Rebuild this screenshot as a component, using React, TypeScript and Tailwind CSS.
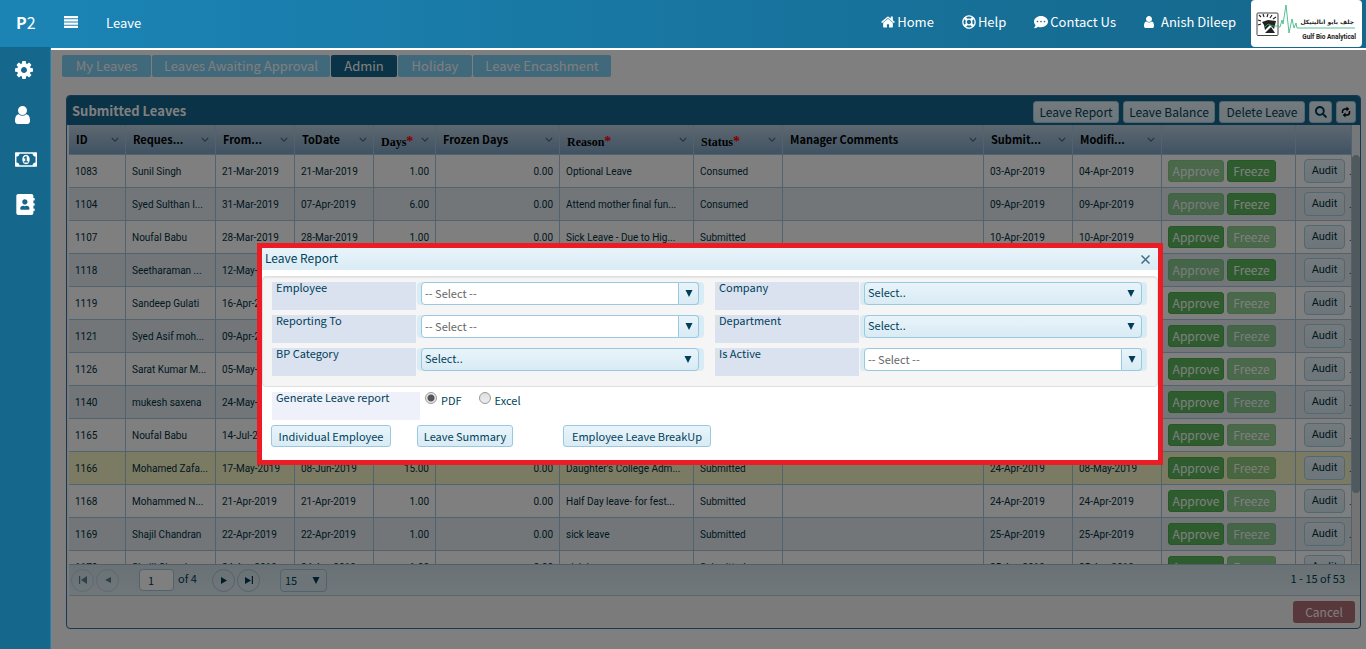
import React from 'react';
import { FaAddressBook, FaCommentDots, FaRegLifeRing, FaSearch } from 'react-icons/fa';

interface LeaveRow {
  id: number;
  requester: string;
  from: string;
  to: string;
  days: string;
  reason: string;
  status: 'Consumed' | 'Submitted';
  submitted: string;
  modified: string;
  approvable: boolean;
}

interface Column {
  label: string;
  width: string;
  required?: boolean;
}

const tabs = [
  { label: 'My Leaves', width: 'w-[89px]' },
  { label: 'Leaves Awaiting Approval', width: 'w-[178px]' },
  { label: 'Admin', width: 'w-[66px]' },
  { label: 'Holiday', width: 'w-[74px]' },
  { label: 'Leave Encashment', width: 'w-[138px]' },
];

const columns: Column[] = [
  { label: 'ID', width: 'w-[57px]' },
  { label: 'Reques...', width: 'w-[90px]' },
  { label: 'From...', width: 'w-[79px]' },
  { label: 'ToDate', width: 'w-[79px]' },
  { label: 'Days', width: 'w-[62px]', required: true },
  { label: 'Frozen Days', width: 'w-[124px]' },
  { label: 'Reason', width: 'w-[134px]', required: true },
  { label: 'Status', width: 'w-[89px]', required: true },
  { label: 'Manager Comments', width: '' },
  { label: 'Submit...', width: 'w-[89px]' },
  { label: 'Modifi...', width: 'w-[89px]' },
  { label: '', width: 'w-[134px]' },
  { label: '', width: 'w-[56px]' },
];

const rows: LeaveRow[] = [
  { id: 1083, requester: 'Sunil Singh', from: '21-Mar-2019', to: '21-Mar-2019', days: '1.00', reason: 'Optional Leave', status: 'Consumed', submitted: '03-Apr-2019', modified: '04-Apr-2019', approvable: false },
  { id: 1104, requester: 'Syed Sulthan I...', from: '31-Mar-2019', to: '07-Apr-2019', days: '6.00', reason: 'Attend mother final fun...', status: 'Consumed', submitted: '09-Apr-2019', modified: '09-Apr-2019', approvable: false },
  { id: 1107, requester: 'Noufal Babu', from: '28-Mar-2019', to: '28-Mar-2019', days: '1.00', reason: 'Sick Leave - Due to Hig...', status: 'Submitted', submitted: '10-Apr-2019', modified: '10-Apr-2019', approvable: true },
  { id: 1118, requester: 'Seetharaman ...', from: '12-May-2019', to: '16-May-2019', days: '5.00', reason: 'Annual Leave', status: 'Submitted', submitted: '14-Apr-2019', modified: '14-Apr-2019', approvable: false },
  { id: 1119, requester: 'Sandeep Gulati', from: '16-Apr-2019', to: '16-Apr-2019', days: '1.00', reason: 'Sick Leave', status: 'Submitted', submitted: '15-Apr-2019', modified: '15-Apr-2019', approvable: true },
  { id: 1121, requester: 'Syed Asif moh...', from: '09-Apr-2019', to: '09-Apr-2019', days: '1.00', reason: 'Sick Leave', status: 'Submitted', submitted: '15-Apr-2019', modified: '15-Apr-2019', approvable: true },
  { id: 1126, requester: 'Sarat Kumar M...', from: '05-May-2019', to: '09-May-2019', days: '5.00', reason: 'Annual Leave', status: 'Submitted', submitted: '16-Apr-2019', modified: '16-Apr-2019', approvable: true },
  { id: 1140, requester: 'mukesh saxena', from: '24-May-2019', to: '30-May-2019', days: '5.00', reason: 'Annual Leave', status: 'Submitted', submitted: '18-Apr-2019', modified: '18-Apr-2019', approvable: true },
  { id: 1165, requester: 'Noufal Babu', from: '14-Jul-2019', to: '25-Jul-2019', days: '10.00', reason: 'Annual Leave', status: 'Submitted', submitted: '24-Apr-2019', modified: '24-Apr-2019', approvable: true },
  { id: 1166, requester: 'Mohamed Zafa...', from: '17-May-2019', to: '08-Jun-2019', days: '15.00', reason: "Daughter's College Adm...", status: 'Submitted', submitted: '24-Apr-2019', modified: '08-May-2019', approvable: true },
  { id: 1168, requester: 'Mohammed N...', from: '21-Apr-2019', to: '21-Apr-2019', days: '1.00', reason: 'Half Day leave- for fest...', status: 'Submitted', submitted: '24-Apr-2019', modified: '24-Apr-2019', approvable: true },
  { id: 1169, requester: 'Shajil Chandran', from: '22-Apr-2019', to: '22-Apr-2019', days: '1.00', reason: 'sick leave', status: 'Submitted', submitted: '25-Apr-2019', modified: '25-Apr-2019', approvable: true },
  { id: 1170, requester: 'Shajil Chandran', from: '24-Apr-2019', to: '24-Apr-2019', days: '1.00', reason: 'sick leave', status: 'Submitted', submitted: '25-Apr-2019', modified: '25-Apr-2019', approvable: true },
];

const SELECTED_ID = 1166;

const MenuIcon = () => (
  <svg viewBox="0 0 14 12" fill="currentColor" className="h-3 w-[14px]" aria-hidden="true">
    <path d="M0 0h14v2.200H0zM0 3.300h14v2.200H0zM0 6.600h14v2.200H0zM0 9.800h14V12H0z" />
  </svg>
);

const UserIcon = ({ className }: { className: string }) => (
  <svg viewBox="256 128 1280 1536" fill="currentColor" className={className} aria-hidden="true">
    <path d="M1536 1399q0 109-62.500 187t-150.500 78h-854q-88 0-150.500-78t-62.500-187q0-85 8.500-160.500t31.500-152 58.500-131 94-89 134.500-34.500q131 128 313 128t313-128q76 0 134.500 34.500t94 89 58.500 131 31.500 152 8.500 160.500zm-256-887q0 159-112.500 271.500t-271.500 112.500-271.500-112.500-112.500-271.500 112.500-271.500 271.500-112.500 271.500 112.500 112.500 271.500z" />
  </svg>
);

const CogIcon = () => (
  <svg viewBox="128 128 1536 1536" fill="currentColor" className="size-[18px]" aria-hidden="true">
    <path d="M1152 896q0-106-75-181t-181-75-181 75-75 181 75 181 181 75 181-75 75-181zm512-109v222q0 12-8 23t-20 13l-185 28q-19 54-39 91 35 50 107 138 10 12 10 25t-9 23q-27 37-99 108t-94 71q-12 0-26-9l-138-108q-44 23-91 38-16 136-29 186-7 28-36 28h-222q-14 0-24.500-8.500t-11.500-21.500l-28-184q-49-16-90-37l-141 107q-10 9-25 9-14 0-25-11-126-114-165-168-7-10-7-23 0-12 8-23 15-21 51-66.500t54-70.500q-27-50-41-99l-183-27q-13-2-21-12.500t-8-23.500v-222q0-12 8-23t19-13l186-28q14-46 39-92-40-57-107-138-10-12-10-24 0-10 9-23 26-36 98.500-107.500t94.500-71.500q13 0 26 10l138 107q44-23 91-38 16-136 29-186 7-28 36-28h222q14 0 24.500 8.500t11.500 21.500l28 184q49 16 90 37l142-107q9-9 24-9 13 0 25 10 129 119 165 170 7 8 7 22 0 12-8 23-15 21-51 66.500t-54 70.500q26 50 41 98l183 28q13 2 21 12.500t8 23.500z" />
  </svg>
);

const MoneyIcon = () => (
  <svg viewBox="0 256 1920 1280" fill="currentColor" className="h-[15px] w-[22px]" aria-hidden="true">
    <path d="M768 1152h384v-96h-128v-448h-114l-148 137 77 80q42-37 55-57h2v288h-128v96zm512-256q0 70-21 142t-59.500 134-101.500 101-138 39-138-39-101.500-101-59.500-134-21-142 21-142 59.500-134 101.500-101 138-39 138 39 101.500 101 59.500 134 21 142zm512 256v-512q-106 0-181-75t-75-181h-1152q0 106-75 181t-181 75v512q106 0 181 75t75 181h1152q0-106 75-181t181-75zm128-832v1152q0 26-19 45t-45 19h-1792q-26 0-45-19t-19-45v-1152q0-26 19-45t45-19h1792q26 0 45 19t19 45z" />
  </svg>
);

const HomeIcon = () => (
  <svg viewBox="64 192 1664 1408" fill="currentColor" className="h-3 w-[14px]" aria-hidden="true">
    <path d="M1472 992v480q0 26-19 45t-45 19h-384v-384h-256v384h-384q-26 0-45-19t-19-45v-480q0-1 .5-3t.5-3l575-474 575 474q1 2 1 6zm223-69l-62 74q-8 9-21 11h-3q-13 0-21-7l-692-577-692 577q-12 8-24 7-13-2-21-11l-62-74q-8-10-7-23.500t11-21.500l719-599q32-26 76-26t76 26l244 204v-195q0-14 9-23t23-9h192q14 0 23 9t9 23v408l219 182q10 8 11 21.500t-7 23.500z" />
  </svg>
);

const RefreshIcon = () => (
  <svg viewBox="0 0 12 12" fill="none" stroke="#000" strokeWidth="1.5" className="size-3" aria-hidden="true">
    <path d="M2.500 7V5.500a2.500 2.500 0 0 1 2.500-2.500h2M9.500 5v1.500a2.500 2.500 0 0 1-2.500 2.500H5" />
    <path d="M6.500 .5 9.300 3 6.500 5.500zM5.500 6.500 2.700 9l2.800 2.500z" fill="#000" stroke="none" />
  </svg>
);

const ChevronIcon = () => (
  <svg viewBox="0 0 10 6" fill="none" stroke="#44617c" strokeWidth="1.4" className="h-[5px] w-2 shrink-0" aria-hidden="true">
    <path d="M1 1l4 4 4-4" />
  </svg>
);

const ArrowDown = ({ className = '' }: { className?: string }) => (
  <svg viewBox="0 0 8 7" fill="#003f59" className={`h-[7px] w-2 ${className}`} aria-hidden="true">
    <path d="M.5 0h7L4 7z" />
  </svg>
);

const Logo = () => (
  <svg viewBox="0 0 111 47" className="h-[47px] w-[111px] rounded bg-white" role="img" aria-label="Gulf Bio Analytical">
    <rect x="6" y="13" width="21" height="22.500" rx="1" fill="#fff" stroke="#444" />
    <path d="M11 22l6-2 8 1-2 8-4-4-5 5-1-5z" fill="#222" />
    <path d="M14 33l6-6 4 6z" fill="#222" />
    <path d="M8 15l2 2M12 14l1 3M17 14l-1 3M21 15l-2 3M25 17l-3 2M7 20l3 1M7 25l3-1" stroke="#222" strokeWidth="1.200" />
    <path d="M13 28l4-4 5 2h5" fill="none" stroke="#35b36b" strokeWidth="0.800" />
    <path d="M27 27h2l2-7 1 4 3-19 3 28 3-14 2 9 2-5 1 5h58" fill="none" stroke="#45b98a" strokeWidth="0.900" />
    <text x="103" y="24" textAnchor="start" direction="rtl" fontSize="6" fontWeight="700" fill="#222" fontFamily="DejaVu Sans, sans-serif">جلف بايو اناليتيكل</text>
    <text x="105" y="39" textAnchor="end" fontSize="6.500" fontWeight="700" fill="#222" fontFamily="Roboto, sans-serif">Gulf Bio Analytical</text>
  </svg>
);

const Sidebar = () => (
  <aside className="flex w-[51px] shrink-0 flex-col border-r border-[#1b84b5] bg-[#15678b] text-white">
    <div className="flex h-[47px] items-center bg-[#1b84b5] pb-1 pl-4 text-base">
      <b>P</b>2
    </div>
    <nav className="flex flex-col">
      <a href="#settings" aria-label="Settings" className="flex h-[45px] items-center pl-[15px]"><CogIcon /></a>
      <a href="#employees" aria-label="Employees" className="flex h-[45px] items-center pl-[15px]"><UserIcon className="h-[18px] w-[15px]" /></a>
      <a href="#payroll" aria-label="Payroll" className="flex h-[45px] items-center pl-[15px]"><MoneyIcon /></a>
      <a href="#contacts" aria-label="Contacts" className="flex h-[45px] items-center pl-[15px]"><FaAddressBook size={21} /></a>
    </nav>
  </aside>
);

const TopBar = () => (
  <header className="flex h-[50px] shrink-0 items-start border-b-2 border-white bg-linear-to-r from-[#1b84b5] to-[#15678b] text-white">
    <button type="button" aria-label="Toggle menu" className="mt-4 ml-[13px]"><MenuIcon /></button>
    <h1 className="mt-[14px] ml-7 text-[13px] leading-[18px]">Leave</h1>
    <nav className="ml-auto flex h-[44px] items-center gap-7 text-[13px]">
      <a href="#home" className="flex items-center gap-0.5"><HomeIcon />Home</a>
      <a href="#help" className="flex items-center gap-0.5"><FaRegLifeRing size={14} />Help</a>
      <a href="#contact" className="flex items-center gap-0.5"><FaCommentDots size={14} />Contact Us</a>
      <a href="#profile" className="flex items-center gap-[7px]"><UserIcon className="h-3 w-[10px]" />Anish Dileep</a>
    </nav>
    <span className="mr-1 ml-[15px]"><Logo /></span>
  </header>
);

const toolButton = 'flex h-[22px] items-center justify-center rounded-[3px] border border-[#a3d0e4] bg-linear-to-b from-[#e9f4fa] to-[#d9ecf5] text-[12px] text-[#003f59]';
const actionButton = 'h-[22px] rounded-[3px] border border-[#4cae4c] bg-[#5cb85c] text-[12px] leading-[18px] text-white disabled:opacity-65';

const LeaveGrid = () => (
  <div className="flex h-[440px] overflow-hidden border-b border-[#a3c0d0] bg-white">
    <div className="min-w-0 flex-1">
      <table className="w-full table-fixed border-separate border-spacing-0 text-[#00303f]">
        <thead>
          <tr className="h-[30px] bg-linear-to-b from-[#bcd0e0] to-[#7ea4c6] text-[11px] text-black">
            {columns.map((col, i) => (
              <th key={i} className={`border-r border-b border-[#a3c7dc] p-0 text-left font-bold ${col.width}`}>
                {col.label && (
                  <span className="flex items-center justify-between pr-[6px] pl-[7px]">
                    {col.required ? (
                      <span className="pt-1 font-['Liberation_Serif',serif] text-[12px]">{col.label}<span className="text-sm leading-none text-[#ff0000]">*</span></span>
                    ) : (
                      <span className="whitespace-nowrap">{col.label}</span>
                    )}
                    <ChevronIcon />
                  </span>
                )}
              </th>
            ))}
          </tr>
        </thead>
        <tbody className="font-[Roboto,sans-serif] text-[10px]">
          {rows.map((row, i) => (
            <tr
              key={row.id}
              className={`h-[33px] *:overflow-hidden *:border-r *:border-b *:border-[#a3c7dc] *:px-[6px] *:py-0 *:whitespace-nowrap ${row.id === SELECTED_ID ? 'bg-[#f7f7c9]' : i % 2 ? 'bg-[#e4edf3]' : 'bg-white'}`}
            >
              <td>{row.id}</td>
              <td>{row.requester}</td>
              <td>{row.from}</td>
              <td>{row.to}</td>
              <td className="text-right">{row.days}</td>
              <td className="text-right">0.00</td>
              <td>{row.reason}</td>
              <td>{row.status}</td>
              <td></td>
              <td>{row.submitted}</td>
              <td>{row.modified}</td>
              <td>
                <div className="flex gap-[3px] font-['Noto_Sans_CJK_SC',sans-serif]">
                  <button type="button" disabled={!row.approvable} className={`w-14 ${actionButton}`}>Approve</button>
                  <button type="button" disabled={row.approvable} className={`w-[49px] ${actionButton}`}>Freeze</button>
                </div>
              </td>
              <td>
                <div className="flex items-center gap-1 pl-0.5">
                  <button type="button" className="h-6 w-[41px] shrink-0 rounded border border-[#a3d0e4] bg-linear-to-b from-[#e9f4fa] to-[#d9ecf5] text-[11px]">Audit</button>
                  <span>.</span>
                </div>
              </td>
            </tr>
          ))}
        </tbody>
      </table>
    </div>
    <div className="flex w-2 shrink-0 flex-col">
      <div className="h-[30px] shrink-0 bg-[#e9f0f5]" />
      <div className="flex-1 rounded-full bg-[#e8e8e8]">
        <div className="h-[338px] rounded-full bg-[#a0b2bd]" />
      </div>
    </div>
  </div>
);

const PagerButton = ({ label, path, disabled }: { label: string; path: string; disabled?: boolean }) => (
  <button type="button" aria-label={label} disabled={disabled} className="flex size-[23px] items-center justify-center rounded-full border border-[#a3c7dc] disabled:opacity-60">
    <svg viewBox="0 0 8 8" className="size-2" fill="#003f59" aria-hidden="true"><path d={path} /></svg>
  </button>
);

const Pager = () => (
  <div className="flex h-[31px] items-center border-b border-[#b5ccd8] bg-linear-to-b from-[#d4e4ea] to-[#e2eef5] pl-0.5 text-[11px] text-[#003f59]">
    <div className="flex gap-0.5">
      <PagerButton label="First page" path="M0 0h1.200v8H0zM8 0v8L2 4z" disabled />
      <PagerButton label="Previous page" path="M7 1v6L1 4z" disabled />
    </div>
    <input aria-label="Page" defaultValue="1" className="ml-5 h-[22px] w-[35px] rounded border border-[#a3c7dc] bg-white pl-2" />
    <span className="ml-1 w-[19px] pb-1 whitespace-nowrap">of 4</span>
    <div className="ml-[15px] flex gap-0.5">
      <PagerButton label="Next page" path="M1 1v7l6-3.500z" />
      <PagerButton label="Last page" path="M0 1v7l6-3.500zM6.800 0H8v8H6.800z" />
    </div>
    <div className="relative ml-5 flex items-center">
      <select aria-label="Rows per page" className="h-[23px] w-[47px] appearance-none rounded border border-[#a3c7dc] bg-[#dcebf3] pl-1">
        <option>15</option>
      </select>
      <ArrowDown className="pointer-events-none absolute right-[7px]" />
    </div>
    <span className="mr-[15px] ml-auto pb-1">1 - 15 of 53</span>
  </div>
);

const Field = ({ id, label, combo }: { id: string; label: string; combo?: boolean }) => (
  <div className="flex h-7">
    <label htmlFor={id} className="w-36 shrink-0 bg-[#dae1ef] pl-1 text-[11px] leading-[10px]">{label}</label>
    <div className="relative ml-px flex h-[23px] flex-1 rounded bg-[#d9ebf5] pr-[5px] pl-1">
      {combo ? (
        <>
          <input id={id} placeholder="-- Select --" className="min-w-0 flex-1 rounded-l border border-[#98c9e0] bg-white pl-[3px] text-[11px] placeholder:text-[#666]" />
          <button type="button" aria-label={`Open ${label}`} className="flex w-5 items-center justify-center rounded-r border border-l-0 border-[#98c9e0] bg-linear-to-b from-[#e9f4fa] to-[#d9ebf5]">
            <ArrowDown />
          </button>
        </>
      ) : (
        <>
          <select id={id} className="min-w-0 flex-1 appearance-none rounded border border-[#98c9e0] bg-linear-to-b from-[#e9f4fa] to-[#d9ebf5] pb-[3px] pl-[3px] text-[11px]">
            <option>Select..</option>
          </select>
          <ArrowDown className="pointer-events-none absolute top-2 right-3" />
        </>
      )}
    </div>
  </div>
);

const reportButton = 'h-[22px] rounded-[3px] border border-[#98c9e0] bg-linear-to-b from-[#e9f4fa] to-[#d9ebf5] text-[11px] leading-5 whitespace-nowrap';
const radio = 'mr-1 size-3 appearance-none rounded-full border border-[#999] bg-linear-to-b from-[#ddd] to-[#eee] bg-origin-border checked:bg-[radial-gradient(circle,#555_3px,#e8e8e8_4px)]';

const LeaveReportDialog = () => (
  <section role="dialog" aria-labelledby="report-title" className="h-[222px] w-[906px] border-5 border-[#ed1c24] bg-white text-[#003f59]">
    <div className="flex h-[22px] items-center justify-between bg-linear-to-b from-[#e9f4fa] to-[#d9ebf5] pr-2 pl-[3px]">
      <h2 id="report-title" className="pb-0.5 text-[12px]">Leave Report</h2>
      <button type="button" aria-label="Close">
        <svg viewBox="0 0 9 9" className="size-[9px]" fill="none" stroke="#3f6f85" strokeWidth="1.500" aria-hidden="true"><path d="M.5 .5l8 8M8.500 .5l-8 8" /></svg>
      </button>
    </div>
    <form>
      <div className="mt-[6px] grid h-[111px] grid-cols-2 content-start gap-x-[11px] gap-y-[5px] rounded border border-[#e0e0e0] bg-[#f5f5f5] pt-[5px] pr-[10px] pl-[9px] shadow-[inset_0_1px_1px_#0001]">
        <Field id="employee" label="Employee" combo />
        <Field id="company" label="Company" />
        <Field id="reporting-to" label="Reporting To" combo />
        <Field id="department" label="Department" />
        <Field id="bp-category" label="BP Category" />
        <Field id="is-active" label="Is Active" combo />
      </div>
      <fieldset className="mt-[5px] ml-[10px] flex h-7 text-[11px]">
        <span className="w-[148px] bg-[#eef1fa] pl-1 leading-[10px]">Generate Leave report</span>
        <label className="ml-[5px] flex leading-4"><input type="radio" name="format" defaultChecked className={radio} />PDF</label>
        <label className="ml-[17px] flex leading-4"><input type="radio" name="format" className={radio} />Excel</label>
      </fieldset>
      <div className="mt-[5px] ml-[9px] flex">
        <button type="button" className={`w-[120px] ${reportButton}`}>Individual Employee</button>
        <button type="button" className={`ml-[26px] w-24 ${reportButton}`}>Leave Summary</button>
        <button type="button" className={`ml-[50px] w-[148px] ${reportButton}`}>Employee Leave BreakUp</button>
      </div>
    </form>
  </section>
);

export default function App() {
  return (
    <div className="flex min-h-screen font-['Noto_Sans_CJK_SC','Liberation_Sans',sans-serif]">
      <Sidebar />
      <div className="flex min-w-0 flex-1 flex-col">
        <TopBar />
        <main className="relative flex-1 bg-white pt-[5px] pr-[5px] pb-5 pl-[11px]">
          <div className="flex gap-px text-[13px]">
            {tabs.map((tab) => (
              <button
                key={tab.label}
                type="button"
                className={`h-[22px] rounded-[2px] leading-[18px] whitespace-nowrap text-white ${tab.width} ${tab.label === 'Admin' ? 'bg-[#14668e]' : 'bg-[#82d2f8]'}`}
              >
                {tab.label}
              </button>
            ))}
          </div>

          <section className="mt-[18px] ml-1 overflow-hidden rounded border border-[#2f6fa5] bg-[#f6f6f6]">
            <div className="flex h-[29px] items-center bg-[#14668e] pr-1 pl-[5px]">
              <h2 className="text-[13px] font-bold text-white">Submitted Leaves</h2>
              <div className="ml-auto flex gap-1 pt-[3px]">
                <button type="button" className={`w-[86px] ${toolButton}`}>Leave Report</button>
                <button type="button" className={`w-[92px] ${toolButton}`}>Leave Balance</button>
                <button type="button" className={`w-[86px] ${toolButton}`}>Delete Leave</button>
                <button type="button" aria-label="Search" className={`w-[23px] ${toolButton}`}><FaSearch size={12} /></button>
                <button type="button" aria-label="Refresh" className={`w-5 ${toolButton}`}><RefreshIcon /></button>
              </div>
            </div>
            <div className="pl-0.5">
              <LeaveGrid />
              <Pager />
            </div>
            <div className="flex justify-end py-[5px] pr-[5px]">
              <button type="button" className="h-[22px] w-[62px] rounded-[3px] bg-[#b07074] text-[12px] leading-5 text-white">Cancel</button>
            </div>
          </section>

          <div className="absolute inset-0 flex items-start justify-center bg-black/50 pt-[193px] pl-[3px]">
            <LeaveReportDialog />
          </div>
        </main>
      </div>
    </div>
  );
}
